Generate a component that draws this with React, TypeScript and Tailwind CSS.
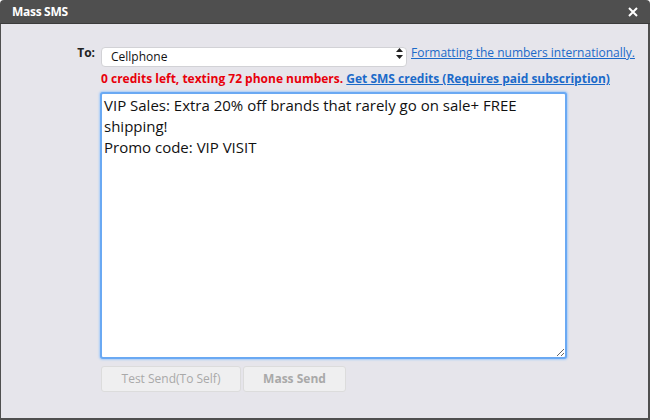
import { useEffect, useRef } from "react";

const App = () => {
  const msgRef = useRef<HTMLTextAreaElement>(null);

  useEffect(() => {
    const el = msgRef.current;
    if (el) {
      el.focus();
      el.setSelectionRange(el.value.length, el.value.length);
    }
  }, []);

  return (
    <div className="w-[650px] h-[420px] flex flex-col font-['Open_Sans',sans-serif] bg-white">
      {/* title bar */}
      <div className="h-[24px] shrink-0 rounded-t-[4px] bg-[#4f4f4f] border-b border-[#3b3b3b] flex items-center justify-between pl-[12px] pr-[12px]">
        <span className="text-white text-[12px] font-bold tracking-[-0.3px]">Mass SMS</span>
        <svg width="10" height="10" viewBox="0 0 10 10" className="text-white">
          <path d="M1 1 L9 9 M9 1 L1 9" stroke="currentColor" strokeWidth="2" />
        </svg>
      </div>

      <div className="flex-1 bg-[#e6e5eb] border-l border-r-2 border-b-2 border-[#4f4f4f] pt-[19px]">
        <div className="flex items-center">
          <label className="w-[94px] text-right text-[12px] font-bold text-[#222]">To:</label>
          <div className="ml-[6px] relative w-[306px] h-[20px]">
            <select className="appearance-none w-full h-full rounded-[4px] border border-[#d2d2d6] bg-white pl-[9px] text-[12px] text-[#111] outline-none">
              <option>Cellphone</option>
            </select>
            <svg width="7" height="11" viewBox="0 0 7 11" className="absolute right-[4px] top-[5px] pointer-events-none">
              <path d="M3.5 0 L7 4 H0 Z M3.5 11 L0 7 H7 Z" fill="#222" />
            </svg>
          </div>
          <a href="#" className="ml-[4px] text-[12px] text-[#1b6ac9] underline">
            Formatting the numbers internationally.
          </a>
        </div>

        <div className="ml-[100px] mt-[7px] text-[12px] font-bold">
          <span className="text-[#e8000b]">0 credits left, texting 72 phone numbers.</span>{" "}
          <a href="#" className="text-[#1b6ac9] underline">
            Get SMS credits (Requires paid subscription)
          </a>
        </div>

        <div className="ml-[99px] mt-[4px] w-[467px]">
          <textarea
            ref={msgRef}
            className="block w-full h-[267px] rounded-[3px] border-2 border-[#6aa9f3] shadow-[0_0_2px_1px_#a9cdf8] bg-white px-[2px] pt-[1px] text-[15px] leading-[21px] text-[#111] caret-black outline-none"
            defaultValue={"VIP Sales: Extra 20% off brands that rarely go on sale+ FREE shipping!\nPromo code: VIP VISIT"}
          />
        </div>

        <div className="ml-[100px] mt-[7px] flex gap-[2px]">
          <button className="w-[140px] h-[26px] rounded-[3px] border border-[#dcdcdc] bg-[#efeff0] text-[12px] text-[#a9a9a9]">
            Test Send(To Self)
          </button>
          <button className="w-[103px] h-[26px] rounded-[3px] border border-[#dcdcdc] bg-[#efeff0] text-[12px] font-bold text-[#a9a9a9]">
            Mass Send
          </button>
        </div>
      </div>
    </div>
  );
};

export default App;
